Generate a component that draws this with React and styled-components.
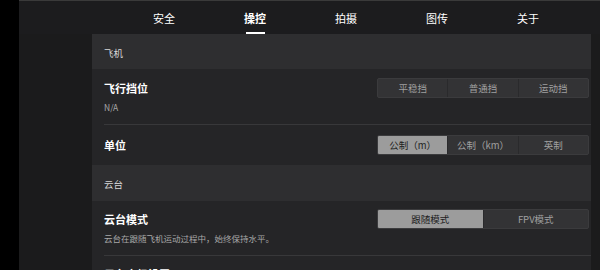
import React from "react";
import styled, { createGlobalStyle } from "styled-components";
import { ChevronRight } from "lucide-react";

const GlobalStyle = createGlobalStyle`
  html, body {
    margin: 0;
    padding: 0;
    background: #000;
    width: 600px;
    height: 270px;
    overflow: hidden;
    font-family: "Noto Sans CJK SC", "Noto Sans", sans-serif;
  }
`;

const Screen = styled.div`
  display: flex;
  width: 600px;
  height: 270px;
  overflow: hidden;
  background: #000;
`;

const Main = styled.div`
  flex: 1;
  display: flex;
  flex-direction: column;
  background: #1b1b1c;
  border-top: 1px solid #3a3a3a;
`;

const NavBar = styled.div`
  height: 33px;
  flex-shrink: 0;
  display: flex;
  justify-content: center;
  padding-left: 73px;
  background: #1c1c1e;
`;

const Tab = styled.div`
  width: 91px;
  display: flex;
  align-items: center;
  justify-content: center;
  position: relative;
  color: #fff;
  font-size: 11px;
  font-weight: ${(p) => (p.$active ? 700 : 400)};

  &::after {
    content: "";
    display: ${(p) => (p.$active ? "block" : "none")};
    position: absolute;
    bottom: 0;
    left: 36px;
    width: 19px;
    height: 2px;
    background: #fff;
  }
`;

const Body = styled.div`
  flex: 1;
  display: flex;
  padding: 0 9px 0 73px;
`;

const Panel = styled.div`
  flex: 1;
  display: flex;
  flex-direction: column;
  background: #252527;
`;

const SectionHeader = styled.div`
  height: ${(p) => p.$h}px;
  flex-shrink: 0;
  display: flex;
  align-items: center;
  padding: 2px 12px 0;
  background: #2e2e30;
  color: #d8d8d8;
  font-size: 9.5px;
`;

const Row = styled.div`
  flex-shrink: 0;
  height: ${(p) => p.$h}px;
  margin-left: 12px;
  padding-right: 2px;
  display: flex;
  flex-direction: column;
  justify-content: ${(p) => (p.$top ? "flex-start" : "center")};
  padding-top: ${(p) => p.$top || 0}px;
  box-sizing: border-box;
  border-bottom: ${(p) => (p.$line ? "1px solid #38383a" : "none")};
`;

const RowMain = styled.div`
  display: flex;
  align-items: center;
  justify-content: space-between;
  height: 20px;
`;

const Title = styled.div`
  color: #fff;
  font-size: 11px;
  font-weight: 700;
`;

const Desc = styled.div`
  color: #a8a8a8;
  font-size: 8.5px;
  margin-top: 3px;
`;

const Segmented = styled.div`
  width: 212px;
  height: 20px;
  display: flex;
  background: #333335;
  border: 1px solid #3b3b3d;
  border-radius: 2px;
  box-sizing: border-box;
  overflow: hidden;
`;

const Segment = styled.div`
  flex: 1;
  display: flex;
  align-items: center;
  justify-content: center;
  font-size: 9.5px;
  color: ${(p) => (p.$on ? "#1e1e1e" : "#a0a0a0")};
  background: ${(p) => (p.$on ? "#9c9c9c" : "transparent")};
  & + & {
    border-left: 1px solid #2a2a2c;
  }
`;

const Chevron = styled(ChevronRight)`
  color: #e0e0e0;
  margin-right: 2px;
`;

function Choice({ items, on }) {
  return (
    <Segmented>
      {items.map((t, i) => (
        <Segment key={t} $on={i === on}>
          {t}
        </Segment>
      ))}
    </Segmented>
  );
}

export default function App() {
  const tabs = ["安全", "操控", "拍摄", "图传", "关于"];
  return (
    <>
      <GlobalStyle />
      <Screen>
        <div style={{ width: 19, flexShrink: 0 }} />
        <Main>
          <NavBar>
            {tabs.map((t) => (
              <Tab key={t} $active={t === "操控"}>
                {t}
              </Tab>
            ))}
          </NavBar>
          <Body>
            <Panel>
              <SectionHeader $h={33}>飞机</SectionHeader>
              <Row $h={56} $top={9} $line>
                <RowMain>
                  <Title>飞行挡位</Title>
                  <Choice items={["平稳挡", "普通挡", "运动挡"]} on={-1} />
                </RowMain>
                <Desc>N/A</Desc>
              </Row>
              <Row $h={40}>
                <RowMain>
                  <Title>单位</Title>
                  <Choice items={["公制（m）", "公制（km）", "英制"]} on={0} />
                </RowMain>
              </Row>
              <SectionHeader $h={34}>云台</SectionHeader>
              <Row $h={55} $top={8} $line>
                <RowMain>
                  <Title>云台模式</Title>
                  <Choice items={["跟随模式", "FPV模式"]} on={0} />
                </RowMain>
                <Desc>云台在跟随飞机运动过程中，始终保持水平。</Desc>
              </Row>
              <Row $h={40} $top={8}>
                <RowMain>
                  <Title>云台高级设置</Title>
                  <Chevron size={12} strokeWidth={2.5} />
                </RowMain>
              </Row>
            </Panel>
          </Body>
        </Main>
      </Screen>
    </>
  );
}
